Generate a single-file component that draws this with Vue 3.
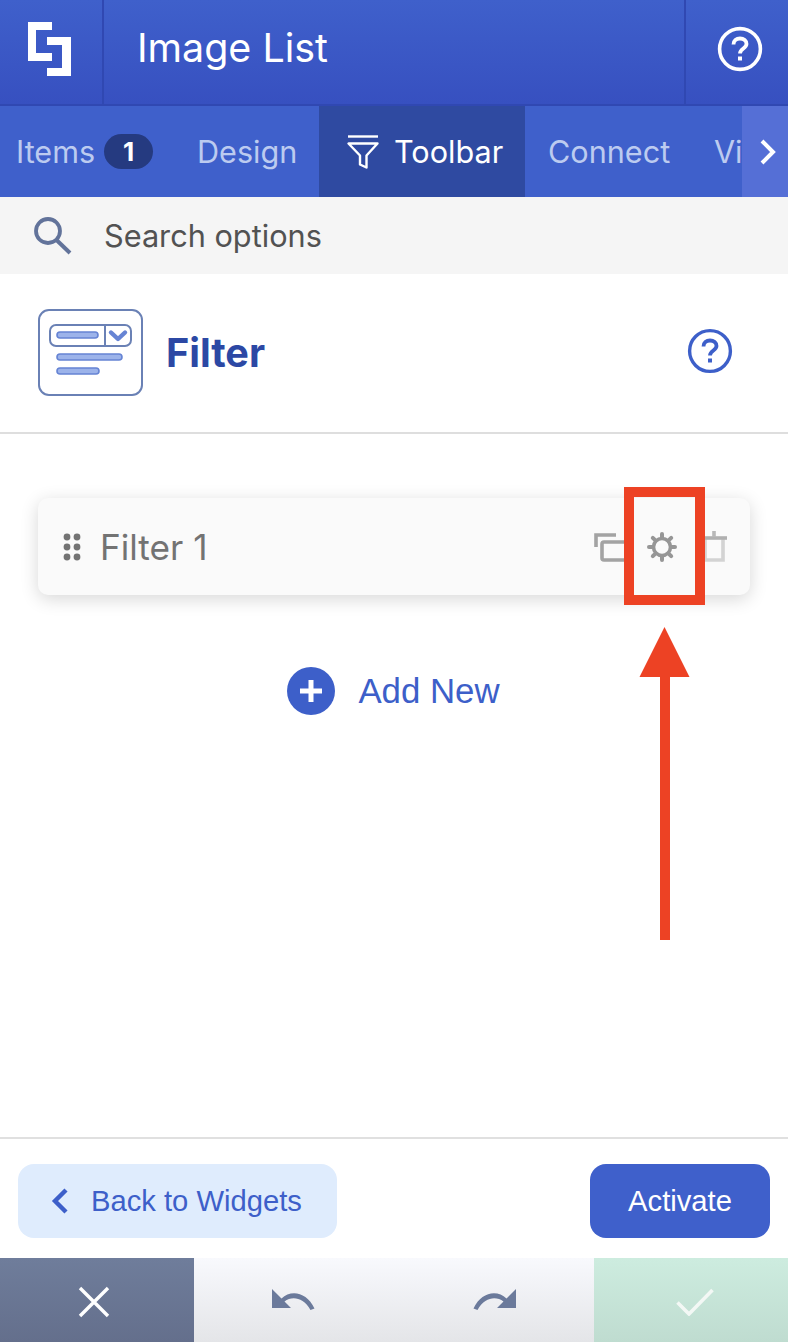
<template>
  <div class="panel">
    <header class="topbar">
      <div class="logo-cell">
        <svg width="43" height="54" viewBox="0 0 43 54" fill="#fff">
          <path d="M0 0H24V8H8V31H24V39H0Z" />
          <path d="M43 15V54H19V46H34V23H19V15Z" />
        </svg>
      </div>
      <h1 class="title">Image List</h1>
      <div class="help-cell">
        <svg width="46" height="46" viewBox="0 0 46 46" fill="none" stroke="#fff" stroke-width="3.6">
          <circle cx="23" cy="23" r="20.4" />
          <path d="M16.5 18.5C16.5 14.6 19.4 12.5 23 12.5C26.8 12.5 29.5 14.8 29.5 18C29.5 22.5 23 22.6 23 27.5" stroke-width="3.8" />
          <rect x="21" y="30.5" width="4" height="4" fill="#fff" stroke="none" />
        </svg>
      </div>
    </header>

    <nav class="tabs">
      <div class="tab-list">
        <div class="tab tab-items">Items <span class="badge">1</span></div>
        <div class="tab tab-design">Design</div>
        <div class="tab tab-active">
          <svg width="34" height="34" viewBox="0 0 34 34" fill="none" stroke="#fff" stroke-width="2.4">
            <path d="M2 1.5H32" />
            <path d="M2.5 8.5H31.5L20.5 20.5V32.5L14 29.5V20.5Z" stroke-linejoin="round" />
          </svg>
          Toolbar
        </div>
        <div class="tab tab-connect">Connect</div>
        <div class="tab tab-vi">Vi</div>
      </div>
      <div class="tab-next">
        <svg width="18" height="26" viewBox="0 0 18 26" fill="none" stroke="#fff" stroke-width="4">
          <path d="M3 2L14 13L3 24" />
        </svg>
      </div>
    </nav>

    <div class="search">
      <svg width="40" height="40" viewBox="0 0 40 40" fill="none" stroke="#62739a" stroke-width="3.8">
        <circle cx="15" cy="15" r="12" />
        <path d="M23.5 24L37 37" stroke-width="4" />
      </svg>
      <span>Search options</span>
    </div>

    <section class="section-head">
      <svg class="filter-icon" width="106" height="88" viewBox="0 0 106 88" fill="none">
        <rect x="1" y="1" width="103" height="85" rx="10" stroke="#6a81b5" stroke-width="2" />
        <rect x="12" y="16" width="81" height="21" rx="6" stroke="#6a81b5" stroke-width="2" />
        <path d="M67 16V37" stroke="#6a81b5" stroke-width="2" />
        <rect x="19" y="23" width="41" height="6" rx="3" fill="#9cb3ea" stroke="#6684d4" stroke-width="1.6" />
        <path d="M73 23.5L80 30L87 23.5" stroke="#6684d4" stroke-width="4.4" stroke-linejoin="round" stroke-linecap="round" />
        <rect x="19" y="45" width="65" height="6" rx="3" fill="#9cb3ea" stroke="#6684d4" stroke-width="1.6" />
        <rect x="19" y="59" width="42" height="6" rx="3" fill="#9cb3ea" stroke="#6684d4" stroke-width="1.6" />
      </svg>
      <h2 class="section-title">Filter</h2>
      <svg class="section-help" width="46" height="46" viewBox="0 0 46 46" fill="none" stroke="#3d5fc9" stroke-width="3.4">
        <circle cx="23" cy="23" r="20.4" />
        <path d="M16.5 18.5C16.5 14.6 19.4 12.5 23 12.5C26.8 12.5 29.5 14.8 29.5 18C29.5 22.5 23 22.6 23 27.5" stroke-width="3.8" />
        <rect x="21" y="30.5" width="4" height="4" fill="#3d5fc9" stroke="none" />
      </svg>
    </section>

    <main class="content">
      <div class="filter-card">
        <svg width="18" height="28" viewBox="0 0 18 28" fill="#737373">
          <circle v-for="dot in dots" :key="dot.id" :cx="dot.x" :cy="dot.y" r="3.4" />
        </svg>
        <span class="filter-name">Filter 1</span>
        <div class="card-actions">
          <svg width="32" height="30" viewBox="0 0 32 30" fill="none" stroke="#a3a3a3" stroke-width="3.6">
            <path d="M2 15V3H22" />
            <rect x="8" y="10" width="28" height="18" rx="2" />
          </svg>
          <svg class="gear" width="32" height="32" viewBox="0 0 32 32" fill="none" stroke="#969696">
            <circle cx="16" cy="16" r="8.5" stroke-width="3.6" />
            <path d="M16 3V6M16 26V29M3 16H6M26 16H29M6.8 6.8L8.9 8.9M23.1 23.1L25.2 25.2M6.8 25.2L8.9 23.1M23.1 8.9L25.2 6.8" stroke-width="4" stroke-linecap="round" />
          </svg>
          <svg width="26" height="32" viewBox="0 0 26 32" fill="none" stroke="#d3d3d3" stroke-width="3.6">
            <path d="M4 7V29H22V7" />
            <path d="M0 7H26" stroke="#b0b0b0" stroke-width="3.6" />
            <path d="M13 0V6" stroke="#b8b8b8" stroke-width="3.6" />
          </svg>
        </div>
      </div>

      <div class="add-new">
        <svg width="48" height="48" viewBox="0 0 48 48">
          <circle cx="24" cy="24" r="24" fill="#3d5fc9" />
          <path d="M24 13V35M13 24H35" stroke="#fff" stroke-width="5" />
        </svg>
        <span>Add New</span>
      </div>
    </main>

    <footer class="actions">
      <button class="back-btn">
        <svg width="18" height="26" viewBox="0 0 18 26" fill="none" stroke="#3d5fc9" stroke-width="4.4">
          <path d="M15 2L4 13L15 24" />
        </svg>
        Back to Widgets
      </button>
      <button class="activate-btn">Activate</button>
    </footer>

    <div class="bottom-bar">
      <div class="bar-btn bar-close">
        <svg width="32" height="32" viewBox="0 0 32 32" stroke="#fff" stroke-width="3.4">
          <path d="M2 2L30 30M30 2L2 30" />
        </svg>
      </div>
      <div class="bar-middle">
        <svg width="44" height="22" viewBox="0 0 44 22" fill="#6b7a9b">
          <path d="M1 0V19H20L13.5 12.5C21 7 32 8 39.5 21L43.5 19.5C36 3 20 0 10.5 9.5Z" />
        </svg>
        <svg width="44" height="22" viewBox="0 0 44 22" fill="#6b7a9b">
          <path d="M43 0V19H24L30.5 12.5C23 7 12 8 4.5 21L.5 19.5C8 3 24 0 33.5 9.5Z" />
        </svg>
      </div>
      <div class="bar-btn bar-save">
        <svg width="38" height="28" viewBox="0 0 38 28" fill="none" stroke="#f3f8f5" stroke-width="3.6">
          <path d="M1.5 14.5L13 26L36.5 2" />
        </svg>
      </div>
    </div>

    <!-- annotation drawn over the screenshot -->
    <div class="mark-box"></div>
    <svg class="mark-arrow" width="52" height="314" viewBox="0 0 52 314" fill="#ed4224">
      <path d="M25.5 0L50.5 50H31V313H21V50H.5Z" />
    </svg>
  </div>
</template>

<script setup>
const dots = [];
[4, 14].forEach((x) => {
  [4, 14, 24].forEach((y) => {
    dots.push({ id: `${x}-${y}`, x, y });
  });
});
</script>

<style>
html,
body {
  margin: 0;
  background: #fff;
}
</style>

<style scoped>
.panel {
  position: relative;
  width: 788px;
  height: 1342px;
  display: flex;
  flex-direction: column;
  overflow: hidden;
  background: #fff;
  font-family: Inter, "Liberation Sans", sans-serif;
}
.topbar {
  height: 106px;
  flex: none;
  box-sizing: border-box;
  display: flex;
  align-items: stretch;
  background: linear-gradient(#3f60cb, #3750c0);
  border-bottom: 2px solid #3048b2;
}
.logo-cell {
  width: 104px;
  flex: none;
  box-sizing: border-box;
  border-right: 2px solid #3048b2;
  display: flex;
  align-items: center;
  justify-content: center;
  padding: 0 10px 6px 6px;
}
.title {
  flex: 1;
  margin: 0 0 8px;
  padding-left: 33px;
  align-self: center;
  font-size: 39.4px;
  font-weight: 400;
  color: #fff;
}
.help-cell {
  width: 104px;
  flex: none;
  box-sizing: border-box;
  border-left: 2px solid #3048b2;
  display: flex;
  align-items: center;
  justify-content: center;
  padding: 0 0 6px 6px;
}
.tabs {
  height: 91px;
  flex: none;
  display: flex;
  background: #3f60cb;
}
.tab-list {
  flex: 1;
  min-width: 0;
  display: flex;
  overflow: hidden;
}
.tab {
  flex: none;
  display: flex;
  align-items: center;
  font-size: 30.6px;
  color: #bccbf0;
  white-space: nowrap;
}
.tab-items {
  width: 197px;
  padding-left: 16px;
  box-sizing: border-box;
  gap: 9px;
}
.badge {
  width: 49px;
  height: 35px;
  border-radius: 18px;
  background: #253a80;
  color: #fff;
  font-size: 26px;
  font-weight: 700;
  display: flex;
  align-items: center;
  justify-content: center;
}
.tab-design {
  width: 122px;
}
.tab-active {
  width: 206px;
  box-sizing: border-box;
  padding-left: 27px;
  gap: 14px;
  background: #2f4aa1;
  color: #fff;
}
.tab-connect {
  width: 189px;
  padding-left: 23px;
  box-sizing: border-box;
}
.tab-next {
  width: 46px;
  flex: none;
  box-sizing: border-box;
  padding-left: 6px;
  background: #556fd6;
  display: flex;
  align-items: center;
  justify-content: center;
}
.search {
  height: 77px;
  flex: none;
  box-sizing: border-box;
  padding-left: 33px;
  display: flex;
  align-items: center;
  gap: 31px;
  background: #f5f5f5;
  font-size: 30.7px;
  color: #525252;
}
.section-head {
  height: 160px;
  flex: none;
  box-sizing: border-box;
  padding: 0 55px 0 38px;
  display: flex;
  align-items: center;
  border-bottom: 2px solid #dedede;
}
.filter-icon {
  margin-right: 22px;
}
.section-title {
  flex: 1;
  margin: 0;
  font-size: 39.6px;
  font-weight: 700;
  color: #2c48a4;
}
.section-help {
  margin-bottom: 4px;
}
.content {
  flex: 1;
  min-height: 0;
  padding: 64px 38px 0;
}
.filter-card {
  height: 97px;
  box-sizing: border-box;
  padding: 0 22px 0 25px;
  display: flex;
  align-items: center;
  gap: 19px;
  border-radius: 10px;
  background: #fafafa;
  box-shadow: 0 4px 18px rgba(0, 0, 0, 0.16);
}
.filter-name {
  flex: 1;
  font-size: 35.2px;
  color: #737373;
}
.card-actions {
  display: flex;
  align-items: center;
  gap: 20px;
  padding-right: 1px;
}
.card-actions svg {
  overflow: visible;
}
.card-actions .gear {
  margin-right: 3px;
}
.add-new {
  margin-top: 72px;
  display: flex;
  align-items: center;
  justify-content: center;
  gap: 23px;
  padding-right: 1px;
  font-family: "Liberation Sans", Arial, sans-serif;
  font-size: 34.8px;
  color: #3d5fc9;
}
.actions {
  height: 121px;
  flex: none;
  box-sizing: border-box;
  padding: 25px 18px 20px;
  display: flex;
  justify-content: space-between;
  border-top: 2px solid #e0e0e0;
}
.back-btn,
.activate-btn {
  height: 74px;
  border: none;
  border-radius: 16px;
  display: flex;
  align-items: center;
  font-family: "Liberation Sans", Arial, sans-serif;
  font-size: 29.2px;
}
.back-btn {
  width: 319px;
  padding: 0 0 0 33px;
  gap: 22px;
  background: #dfecfd;
  color: #3d5fc9;
}
.activate-btn {
  width: 180px;
  justify-content: center;
  padding: 0;
  background: #3f60cb;
  color: #fff;
}
.bottom-bar {
  height: 84px;
  flex: none;
  display: flex;
}
.bar-btn {
  width: 194px;
  flex: none;
  box-sizing: border-box;
  display: flex;
  align-items: center;
  justify-content: center;
  padding-top: 4px;
}
.bar-close {
  padding-right: 6px;
  background: linear-gradient(#6f7d9b, #646f8c);
}
.bar-middle {
  flex: 1;
  display: flex;
  align-items: center;
  justify-content: center;
  gap: 158px;
  background: linear-gradient(#f8f9fd, #e4e5e8);
}
.bar-save {
  width: 194px;
  padding-left: 8px;
  background: linear-gradient(#cdecdf, #bfdcd0);
}
.mark-box {
  position: absolute;
  left: 624px;
  top: 487px;
  width: 81px;
  height: 118px;
  box-sizing: border-box;
  border: 10px solid #ed4224;
}
.mark-arrow {
  position: absolute;
  left: 639px;
  top: 627px;
}
</style>
